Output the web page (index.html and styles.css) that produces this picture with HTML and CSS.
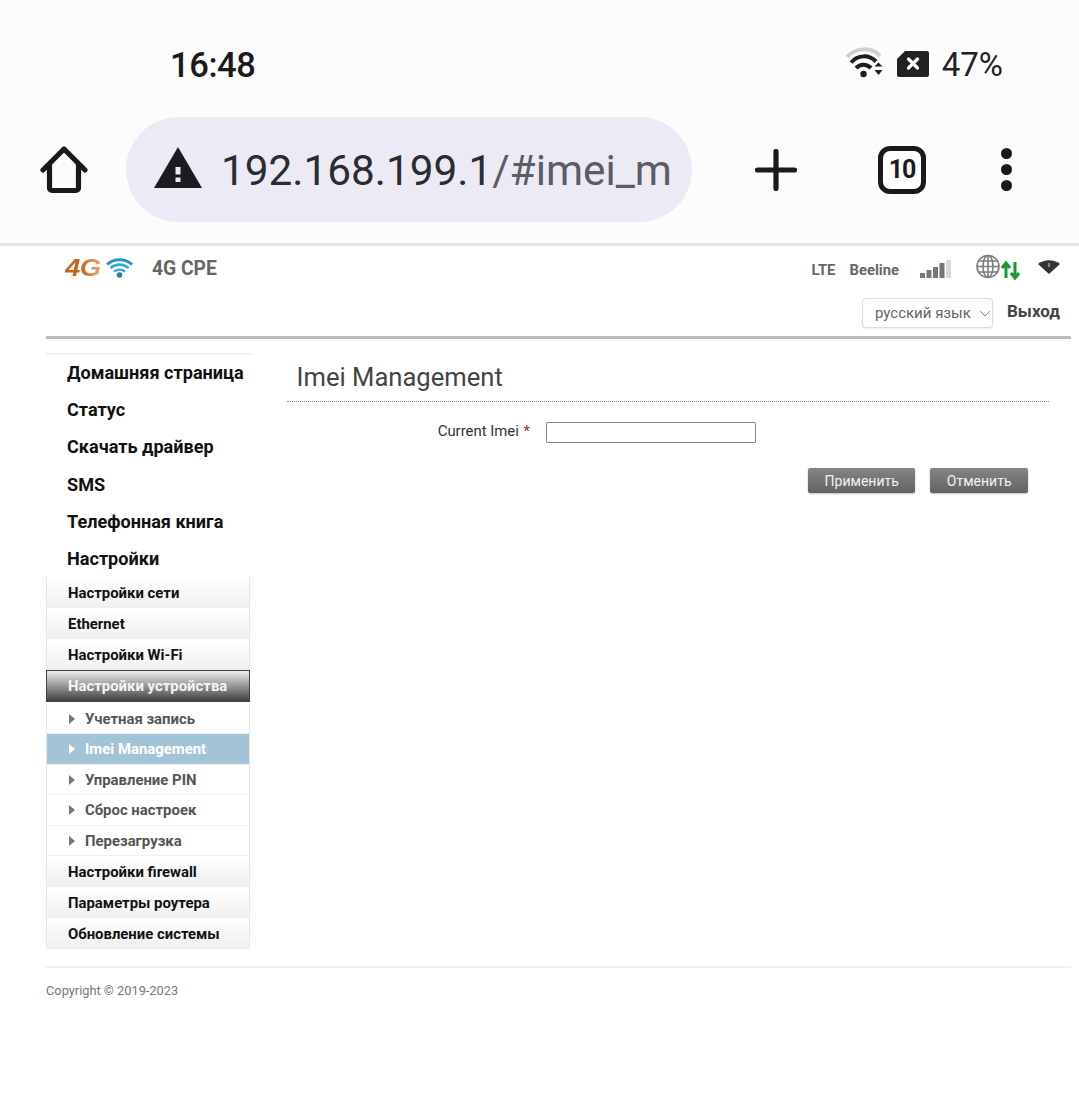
FILE: index.html
```html
<!DOCTYPE html>
<html lang="ru">
<head>
<meta charset="utf-8">
<title>Imei Management</title>
<link rel="stylesheet" href="styles.css">
</head>
<body>
<div class="chrome">
  <div class="status">
    <span class="clock">16:48</span>
    <div class="status-right">
      <svg class="st-wifi" width="40" height="32" viewBox="0 0 40 32">
        <path d="M2 10 C11 0 27 0 35 9" fill="none" stroke="#cfcfcf" stroke-width="4"/>
        <path d="M6 15.500 C13 7.500 24 7.500 31 14.500" fill="none" stroke="#1e1e1e" stroke-width="4"/>
        <path d="M11 21 C15.500 16.500 21.500 16.500 26 21" fill="none" stroke="#1e1e1e" stroke-width="4"/>
        <circle cx="18.500" cy="27" r="3.200" fill="#1e1e1e"/>
        <path d="M29.500 19.500 L33.500 15.500 L37.500 19.500Z M29.500 23 L37.500 23 L33.500 28Z" fill="#1e1e1e"/>
      </svg>
      <svg class="st-sim" width="32" height="26" viewBox="0 0 32 26">
        <path d="M8 0 H30 a2 2 0 0 1 2 2 V24 a2 2 0 0 1 -2 2 H2 a2 2 0 0 1 -2 -2 V8Z" fill="#222"/>
        <path d="M11.500 8 L20.500 17 M20.500 8 L11.500 17" stroke="#fff" stroke-width="3.200" stroke-linecap="round"/>
      </svg>
      <span class="battery">47%</span>
    </div>
  </div>
  <div class="toolbar">
    <svg class="tb-home" width="48" height="48" viewBox="0 0 48 48">
      <path d="M3 24 L24 3 L45 24 M9.500 19 V42 a2.500 2.500 0 0 0 2.500 2.500 H36 a2.500 2.500 0 0 0 2.500 -2.500 V19" fill="none" stroke="#1a1a1c" stroke-width="5.200" stroke-linecap="round" stroke-linejoin="round"/>
    </svg>
    <div class="urlbar">
      <svg class="tb-warn" width="48" height="42" viewBox="0 0 48 42">
        <path d="M24 0 L48 41 H0Z" fill="#1c1c1e"/>
        <rect x="21.500" y="20" width="5" height="7.500" fill="#ecebf5"/>
        <rect x="21.500" y="30.500" width="5" height="4.500" fill="#ecebf5"/>
      </svg>
      <span class="url"><span class="host">192.168.199.1</span><span class="path">/#imei_m</span></span>
    </div>
    <svg class="tb-plus" width="42" height="42" viewBox="0 0 42 42">
      <path d="M21 2.500 V39.500 M2.500 21 H39.500" stroke="#1a1a1c" stroke-width="5.200" stroke-linecap="round"/>
    </svg>
    <div class="tabs">10</div>
    <div class="dots"><i></i><i></i><i></i></div>
  </div>
</div>

<div class="page">
  <header class="head">
    <div class="head-top">
      <div class="brand">
        <span class="logo-4g"><span class="logo-text">4G</span></span>
        <svg class="logo-wifi" width="27" height="22" viewBox="0 0 27 22">
          <path d="M1 7.500 C8 1 19 1 26 7.500" fill="none" stroke="#2a93c4" stroke-width="3"/>
          <path d="M4.500 11 C9.500 6.500 17.500 6.500 22.500 11" fill="none" stroke="#35a9d6" stroke-width="2.600"/>
          <path d="M8 14.500 C11 12 16 12 19 14.500" fill="none" stroke="#35a9d6" stroke-width="2.400"/>
          <circle cx="13.500" cy="18" r="2.800" fill="#1f7fa8"/>
        </svg>
        <span class="model">4G CPE</span>
      </div>
      <div class="indicators">
        <span class="ind-text">LTE</span>
        <span class="ind-text">Beeline</span>
        <svg class="signal" width="31" height="20" viewBox="0 0 31 20">
          <rect x="0" y="14" width="5" height="5" fill="#777"/>
          <rect x="6.500" y="11" width="5" height="8" fill="#777"/>
          <rect x="13" y="8" width="5" height="11" fill="#777"/>
          <rect x="19.500" y="4" width="5" height="15" fill="#777"/>
          <rect x="26" y="1" width="5" height="18" fill="#d9d9d9"/>
        </svg>
        <svg class="globe" width="44" height="28" viewBox="0 0 44 28">
          <g fill="none" stroke="#7d7d7d" stroke-width="1.600">
            <circle cx="12" cy="12.500" r="11"/>
            <ellipse cx="12" cy="12.500" rx="5" ry="11"/>
            <path d="M12 1.500 V23.500 M1 12.500 H23 M2.500 7 H21.500 M2.500 18 H21.500"/>
          </g>
          <path d="M30 24 V10 M26 14 L30 9 L34 14 M39 8 V23 M35 19 L39 24 L43 19" fill="none" stroke="#149a35" stroke-width="3"/>
        </svg>
        <svg class="wifi-small" width="22" height="14" viewBox="0 0 22 14">
          <path d="M0 4 C6 -1 16 -1 22 4 L11 14Z" fill="#333"/>
          <rect x="10.300" y="3" width="1.400" height="4" fill="#aaa"/>
        </svg>
      </div>
    </div>
    <div class="head-bottom">
      <div class="lang-wrap">
        <select class="lang"><option>русский язык</option></select>
        <svg class="lang-arrow" width="12" height="7" viewBox="0 0 12 7"><path d="M1 1 L6 6 L11 1" fill="none" stroke="#888" stroke-width="1"/></svg>
      </div>
      <a class="logout">Выход</a>
    </div>
  </header>

  <div class="main">
    <nav class="side">
      <ul class="menu">
        <li>Домашняя страница</li>
        <li>Статус</li>
        <li>Скачать драйвер</li>
        <li>SMS</li>
        <li>Телефонная книга</li>
        <li>Настройки</li>
      </ul>
      <ul class="sub">
        <li class="sub-item">Настройки сети</li>
        <li class="sub-item">Ethernet</li>
        <li class="sub-item">Настройки Wi-Fi</li>
        <li class="sub-item open">Настройки устройства</li>
        <li class="sub2">
          <ul class="leafs">
            <li class="leaf">Учетная запись</li>
            <li class="leaf current">Imei Management</li>
            <li class="leaf">Управление PIN</li>
            <li class="leaf">Сброс настроек</li>
            <li class="leaf">Перезагрузка</li>
          </ul>
        </li>
        <li class="sub-item">Настройки firewall</li>
        <li class="sub-item">Параметры роутера</li>
        <li class="sub-item">Обновление системы</li>
      </ul>
    </nav>
    <section class="content">
      <h1 class="title">Imei Management</h1>
      <div class="field">
        <label class="field-label">Current Imei <span class="req">*</span></label>
        <input class="field-input" type="text">
      </div>
      <div class="actions">
        <button class="btn">Применить</button>
        <button class="btn">Отменить</button>
      </div>
    </section>
  </div>

  <footer class="foot">Copyright © 2019-2023</footer>
</div>
</body>
</html>
```
FILE: styles.css
```css
* { box-sizing: border-box; }
html, body { margin: 0; padding: 0; background: #fff; }
body { font-family: Roboto, "Liberation Sans", sans-serif; height: 1103px; overflow: hidden; }
ul { list-style: none; margin: 0; padding: 0; }

.chrome { height: 246px; background: #fcfcfd; border-bottom: 3px solid #e4e4e7; }
.status { height: 117px; display: flex; justify-content: space-between; padding: 41px 76px 0 170px; }
.clock { font-size: 34.500px; line-height: 46px; font-weight: 500; color: #1a1a1a; font-family: Roboto, sans-serif; letter-spacing: -.4px; margin-top: 1px; }
.status-right { display: flex; align-items: flex-start; height: 46px; }
.st-wifi { margin-top: 6px; margin-right: 12px; }
.st-sim { margin-top: 10px; margin-right: 13px; }
.battery { font-size: 33px; line-height: 46px; color: #222; margin-top: 1px; }

.toolbar { display: flex; align-items: center; height: 105px; padding-left: 40px; }
.tb-home { flex: none; margin-right: 38px; }
.urlbar { flex: none; width: 566px; height: 105px; border-radius: 53px; background: #ecebf5; display: flex; align-items: center; padding-left: 28px; overflow: hidden; }
.tb-warn { flex: none; margin-right: 19px; margin-top: -4px; }
.url { font-size: 42.300px; white-space: nowrap; color: #2b2b30; margin-top: 2px; }
.path { color: #5c5c66; }
.tb-plus { flex: none; margin-left: 63px; }
.tabs { flex: none; margin-left: 81px; width: 48px; height: 48px; border: 5px solid #1a1a1c; border-radius: 12px; font-size: 25px; font-weight: 700; letter-spacing: -1px; color: #1a1a1c; display: flex; align-items: center; justify-content: center; background: #fff; }
.dots { flex: none; margin-left: 75px; display: flex; flex-direction: column; gap: 5px; }
.dots i { display: block; width: 11px; height: 11px; border-radius: 50%; background: #1a1a1c; }

.page { padding: 0 8px 0 46px; }
.head { height: 93px; border-bottom: 3px solid #bdbdbd; }
.head-top { display: flex; justify-content: space-between; height: 48px; padding: 0 11px 0 19px; }
.brand { display: flex; align-items: center; height: 44px; }
.logo-4g { width: 41px; }
.logo-text { display: inline-block; transform: scaleX(1.15); transform-origin: left center; font-family: "Liberation Sans", sans-serif; font-size: 24px; font-weight: 700; font-style: italic; letter-spacing: -.5px; background: linear-gradient(90deg, #c8651c, #c8651c 45%, #e9a877); -webkit-background-clip: text; background-clip: text; color: transparent; }
.logo-wifi { margin-right: 19px; }
.model { font-size: 19.300px; font-weight: 700; color: #666; }
.indicators { display: flex; align-items: center; height: 48px; }
.ind-text { font-size: 14.800px; font-weight: 700; color: #666; margin-right: 14px; }
.signal { margin-left: 7px; margin-right: 25px; margin-top: -2px; }
.globe { margin-right: 18px; margin-top: -4px; }
.wifi-small { margin-top: -6px; }
.head-bottom { display: flex; justify-content: flex-end; align-items: center; height: 33px; padding-right: 11px; }
.lang-wrap { position: relative; width: 131px; height: 30px; margin-right: 14px; margin-top: 4px; }
.lang { appearance: none; -webkit-appearance: none; width: 100%; height: 100%; border: 1px solid #ddd; border-radius: 4px; background: #fff; color: #666; font: 15px Roboto, sans-serif; padding-left: 12px; box-shadow: 0 1px 2px rgba(0,0,0,.08); }
.lang-arrow { position: absolute; right: 2px; top: 12px; }
.logout { font-size: 17px; font-weight: 700; color: #444; }

.main { display: flex; padding-top: 14px; }
.side { flex: none; width: 205px; }
.menu { border-top: 2px solid #f1f1f1; height: 224px; }
.menu li { height: 37.200px; line-height: 35.500px; padding-left: 21px; font-size: 18.100px; font-weight: 700; color: #111; white-space: nowrap; }
.sub { width: 204px; }
.sub-item { height: 31px; line-height: 32px; padding-left: 21px; font-size: 14.900px; font-weight: 700; color: #111; background: linear-gradient(#fff, #f0f0f0); border-left: 1px solid #e6e6e6; border-right: 1px solid #e6e6e6; border-bottom: 1px solid #eee; }
.sub-item.open { height: 32px; color: #f4f4f4; background: linear-gradient(#eeeeee, #3f3f3f); border: 1px solid #444; line-height: 30px; }
.sub2 { padding-top: 2px; }
.leaf { position: relative; height: 30.400px; line-height: 30px; padding-left: 38px; font-size: 14.900px; font-weight: 700; color: #555; border-left: 1px solid #e6e6e6; border-right: 1px solid #e6e6e6; border-bottom: 1px solid #eee; background: #fff; }
.leaf::before { content: ""; position: absolute; left: 22px; top: 10px; border-left: 6px solid #777; border-top: 5px solid transparent; border-bottom: 5px solid transparent; }
.leaf.current { background: #a3c3d6; color: #fff; }
.leaf.current::before { border-left-color: #fff; }

.content { flex: 1; padding: 0 22px 0 36px; min-width: 0; }
.title { margin: 0; padding: 0 0 0 9.500px; height: 49px; line-height: 49px; font-size: 25.600px; font-weight: 400; color: #444; border-bottom: 1px dotted #8a8a8a; }
.field { display: flex; align-items: flex-start; margin-top: 20px; height: 21px; }
.field-label { width: 243px; text-align: right; font-size: 14.900px; line-height: 18px; color: #333; white-space: nowrap; }
.req { color: #b5182b; margin-left: 1px; }
.field-input { margin-left: 16px; width: 210px; height: 21px; padding: 0 4px; border: 1px solid #8a8a8a; background: #fff; border-radius: 1px; }
.actions { display: flex; justify-content: flex-end; gap: 15px; margin-top: 25px; padding-right: 21px; }
.btn { height: 25px; padding: 0 16.500px; border: 0; border-radius: 2px; background: linear-gradient(#858585, #626262); box-shadow: 0 1px 2px rgba(0,0,0,.25); color: #f2f2f2; font: 14px Roboto, sans-serif; }

.foot { margin-top: 17px; border-top: 2px solid #f1f1f1; padding-top: 15px; font-size: 12.800px; line-height: 16px; color: #777; }
```
